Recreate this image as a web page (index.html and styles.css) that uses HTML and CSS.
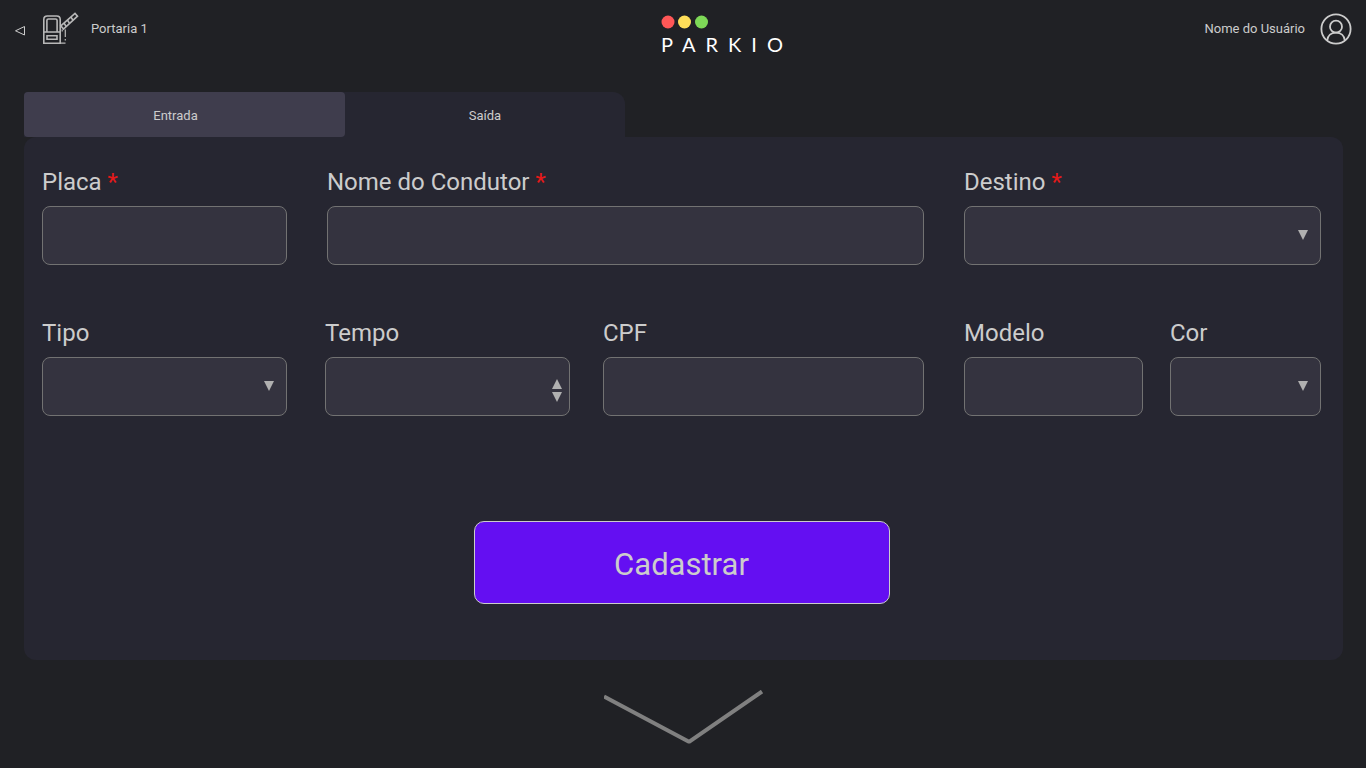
FILE: index.html
```html
<!DOCTYPE html>
<html lang="pt-BR">
<head>
<meta charset="utf-8">
<meta name="viewport" content="width=device-width, initial-scale=1">
<title>Parkio</title>
<link rel="stylesheet" href="styles.css">
</head>
<body>
<header class="topbar">
  <div class="gate">
    <button class="icon-button" type="button" aria-label="Voltar">
      <svg width="12" height="12" viewBox="0 0 12 12"><path d="M10.500 1.500v8.500L1.500 5.800z" fill="none" stroke="currentColor"/></svg>
    </button>
    <svg class="gate-icon" width="36" height="34" viewBox="0 0 36 34" fill="none" stroke="currentColor" stroke-width="1.600" aria-hidden="true">
      <path d="M.8 31.200V7.500Q.8 4 4.300 4h9.400q3.500 0 3.500 3.500v23.700z"/>
      <path d="M3.900 20V8.500Q3.900 7 5.400 7h7.200q1.500 0 1.500 1.500V20"/>
      <path d="M.8 20h16.400M4 23.800h10v3.400H4z"/>
      <path d="M17.200 31.200h5.300M22.300 17.500v7.500M22.300 27v1.500M19.200 17.500v2" stroke-width="1.200"/>
      <path d="M17.800 13.800 32 1.400l2.500 2.800L20.500 17zM21 11l2 3.300M24.500 8l2 3.300M28 5l2 3.300"/>
    </svg>
    <span class="gate-name">Portaria 1</span>
  </div>
  <a class="brand" href="#">
    <svg width="47" height="14" viewBox="0 0 47 14" aria-hidden="true">
      <circle cx="7" cy="7" r="6.500" fill="#ff5757"/>
      <circle cx="23.500" cy="7" r="6.500" fill="#ffde59"/>
      <circle cx="40.500" cy="7" r="6.500" fill="#7ed957"/>
    </svg>
    <span class="brand-name">PARKIO</span>
  </a>
  <a class="user" href="#">
    <span>Nome do Usuário</span>
    <svg width="32" height="32" viewBox="0 0 32 32" fill="none" stroke="currentColor" stroke-width="1.800" aria-hidden="true">
      <circle cx="16" cy="16" r="14.600"/>
      <circle cx="16" cy="13.700" r="6"/>
      <path d="M7.200 27.500c.5-4.800 4-7.800 8.800-7.800s8.300 3 8.800 7.800"/>
    </svg>
  </a>
</header>

<main class="content">
  <div class="tabs" role="tablist">
    <button class="tab tab-active" type="button" role="tab" aria-selected="true">Entrada</button>
    <button class="tab" type="button" role="tab" aria-selected="false">Saída</button>
  </div>
  <form class="panel">
    <div class="row row-main">
      <div class="field">
        <label for="placa">Placa <span class="required">*</span></label>
        <input class="control" id="placa" type="text" required>
      </div>
      <div class="field">
        <label for="condutor">Nome do Condutor <span class="required">*</span></label>
        <input class="control" id="condutor" type="text" required>
      </div>
      <div class="field">
        <label for="destino">Destino <span class="required">*</span></label>
        <div class="control-wrap">
          <select class="control" id="destino" required><option value=""></option></select>
          <svg class="caret" width="10" height="10" viewBox="0 0 10 10" aria-hidden="true"><path d="M0 0h10L5 10z"/></svg>
        </div>
      </div>
    </div>
    <div class="row row-extra">
      <div class="row group-left">
        <div class="row group-pair">
          <div class="field">
            <label for="tipo">Tipo</label>
            <div class="control-wrap">
              <select class="control" id="tipo"><option value=""></option></select>
              <svg class="caret" width="10" height="10" viewBox="0 0 10 10" aria-hidden="true"><path d="M0 0h10L5 10z"/></svg>
            </div>
          </div>
          <div class="field">
            <label for="tempo">Tempo</label>
            <div class="control-wrap">
              <input class="control" id="tempo" type="number">
              <div class="stepper">
                <button type="button" aria-label="Aumentar"><svg width="10" height="10" viewBox="0 0 10 10"><path d="M0 10h10L5 0z"/></svg></button>
                <button type="button" aria-label="Diminuir"><svg width="10" height="10" viewBox="0 0 10 10"><path d="M0 0h10L5 10z"/></svg></button>
              </div>
            </div>
          </div>
        </div>
        <div class="field">
          <label for="cpf">CPF</label>
          <input class="control" id="cpf" type="text">
        </div>
      </div>
      <div class="row group-right">
        <div class="field">
          <label for="modelo">Modelo</label>
          <input class="control" id="modelo" type="text">
        </div>
        <div class="field">
          <label for="cor">Cor</label>
          <div class="control-wrap">
            <select class="control" id="cor"><option value=""></option></select>
            <svg class="caret" width="10" height="10" viewBox="0 0 10 10" aria-hidden="true"><path d="M0 0h10L5 10z"/></svg>
          </div>
        </div>
      </div>
    </div>
    <button class="submit" type="submit">Cadastrar</button>
  </form>
  <button class="more" type="button" aria-label="Mostrar mais">
    <svg width="160" height="56" viewBox="0 0 160 56" fill="none" stroke="#808080" stroke-width="4"><path d="M0 6.500 85 51.800 158 1.500" stroke-linejoin="bevel"/></svg>
  </button>
</main>
</body>
</html>
```
FILE: styles.css
```css
* {
  box-sizing: border-box;
}

body {
  margin: 0;
  background: #202125;
  color: #ccc;
  font-family: Roboto, "Liberation Sans", sans-serif;
  font-size: 13px;
  line-height: 16px;
}

button {
  padding: 0;
  border: 0;
  background: none;
  color: inherit;
  font: inherit;
  cursor: pointer;
}

a {
  color: inherit;
  text-decoration: none;
}

svg {
  display: block;
}

.topbar {
  display: grid;
  grid-template-columns: 1fr auto 1fr;
  align-items: start;
  padding: 12px 14px 0;
}

.gate,
.user {
  display: flex;
  align-items: center;
}

.gate-icon {
  margin: 0 12px 0 17px;
  color: #b8b8b8;
}

.icon-button {
  padding-top: 4px;
}

.user {
  justify-content: flex-end;
  gap: 15px;
  padding-top: 1px;
}

.brand {
  display: flex;
  flex-direction: column;
  gap: 5px;
  padding-top: 3px;
  margin-left: 88px;
}

.brand-name {
  color: #fff;
  font-family: Lato, sans-serif;
  font-size: 20px;
  line-height: 20px;
  letter-spacing: 10px;
}

.content {
  padding: 38px 23px 0 24px;
}

.tabs {
  display: grid;
  grid-template-columns: 321fr 280fr;
  max-width: 601px;
  background: #262631;
  border-radius: 4px 12px 0 0;
}

.tab {
  height: 45px;
  padding-top: 2px;
}

.tab-active {
  padding-right: 18px;
  background: #3f3d4d;
  border-radius: 4px;
}

.panel {
  display: flex;
  flex-direction: column;
  padding: 31px 22px 56px 18px;
  background: #262631;
  border-radius: 12px;
}

.row {
  display: grid;
}

.row-main {
  grid-template-columns: 245fr 597fr 357fr;
  gap: 40px;
}

.row-extra {
  grid-template-columns: 882fr 357fr;
  gap: 40px;
  margin-top: 54px;
}

.group-left {
  grid-template-columns: 528fr 321fr;
  gap: 33px;
}

.group-pair {
  grid-template-columns: 1fr 1fr;
  gap: 38px;
}

.group-right {
  grid-template-columns: 179fr 151fr;
  gap: 27px;
}

.field {
  display: flex;
  flex-direction: column;
  gap: 10px;
  min-width: 0;
}

.field label {
  font-size: 24px;
  line-height: 28px;
}

.required {
  color: #e61919;
}

.control-wrap {
  position: relative;
}

.control {
  display: block;
  width: 100%;
  height: 59px;
  padding: 0 16px;
  border: 1px solid #727272;
  border-radius: 8px;
  background: #34333f;
  color: inherit;
  font: inherit;
  font-size: 24px;
  appearance: none;
}

input[type="number"] {
  appearance: textfield;
}

.caret {
  position: absolute;
  top: 24px;
  right: 13px;
  fill: #b0b0b0;
  pointer-events: none;
}

.stepper {
  position: absolute;
  top: 22px;
  right: 8px;
  display: grid;
  gap: 3px;
  fill: #b0b0b0;
}

.submit {
  align-self: center;
  width: 416px;
  max-width: 100%;
  height: 83px;
  margin-top: 105px;
  padding-top: 4px;
  border: 1px solid #ccc;
  border-radius: 10px;
  background: #640ff2;
  font-size: 31px;
  line-height: 38px;
}

.more {
  display: block;
  margin: 30px auto 20px;
}
```
